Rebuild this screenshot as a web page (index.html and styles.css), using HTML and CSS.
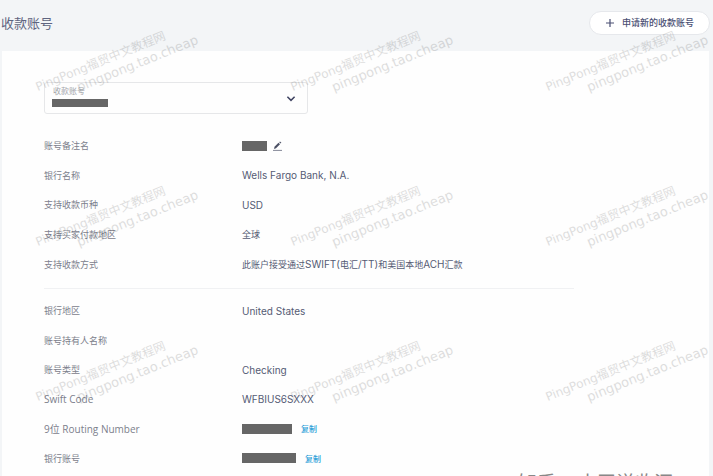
FILE: index.html
```
<!DOCTYPE html>
<html lang="zh-CN">
<head>
  <meta charset="UTF-8" />
  <title>收款账号</title>
  <meta name="viewport" content="width=device-width, initial-scale=1.0" />
  <link rel="stylesheet" href="styles.css">
</head>
<body>

  <header class="page-header">
    <h1>收款账号</h1>
    <button class="btn-apply" type="button">
      <svg width="8" height="8" viewBox="0 0 8 8" aria-hidden="true">
        <path d="M4 0V8M0 4H8" stroke="#4a4f73" stroke-width="1.2" />
      </svg>
      申请新的收款账号
    </button>
  </header>

  <main class="panel">
    <div class="account-select">
      <label for="account">收款账号</label>
      <select id="account">
        <option></option>
      </select>
      <span class="mask mask-account"></span>
      <svg class="chevron" width="10" height="6" viewBox="0 0 10 6" aria-hidden="true">
        <path d="M1.4 0.8L5 4.4L8.6 0.8" fill="none" stroke="#3f4361" stroke-width="1.5" />
      </svg>
    </div>

    <dl class="details">
      <div class="row">
        <dt>账号备注名</dt>
        <dd>
          <span class="mask mask-note"></span>
          <button class="btn-edit" type="button" aria-label="编辑">
            <svg width="9" height="10" viewBox="0 0 9 10" aria-hidden="true">
              <path d="M1 8L1.5 5.8L5.5 1.8L7 3.2L3 7.3Z" fill="#4a4f63" />
              <path d="M6.2 1.2L7 0.4L8.4 1.8L7.6 2.6Z" fill="#4a4f63" />
              <path d="M0 9.4H9" stroke="#777b8c" stroke-width="0.9" />
            </svg>
          </button>
        </dd>
      </div>
      <div class="row">
        <dt>银行名称</dt>
        <dd>Wells Fargo Bank, N.A.</dd>
      </div>
      <div class="row">
        <dt>支持收款币种</dt>
        <dd>USD</dd>
      </div>
      <div class="row">
        <dt>支持买家付款地区</dt>
        <dd class="cjk">全球</dd>
      </div>
      <div class="row">
        <dt>支持收款方式</dt>
        <dd class="cjk"><p>此账户接受通过<span>SWIFT(</span>电汇<span>/TT)</span>和美国本地<span>ACH</span>汇款</p></dd>
      </div>
    </dl>

    <dl class="details bank">
      <div class="row">
        <dt>银行地区</dt>
        <dd>United States</dd>
      </div>
      <div class="row">
        <dt>账号持有人名称</dt>
        <dd></dd>
      </div>
      <div class="row">
        <dt>账号类型</dt>
        <dd>Checking</dd>
      </div>
      <div class="row">
        <dt class="latin">Swift Code</dt>
        <dd>WFBIUS6SXXX</dd>
      </div>
      <div class="row">
        <dt class="latin">9位 Routing Number</dt>
        <dd><span class="mask mask-routing"></span><a class="copy" href="#">复制</a></dd>
      </div>
      <div class="row">
        <dt>银行账号</dt>
        <dd><span class="mask mask-number"></span><a class="copy" href="#">复制</a></dd>
      </div>
    </dl>
  </main>

  <div class="watermarks" aria-hidden="true">
    <p><span>PingPong福贸中文教程网</span><span>pingpong.tao.cheap</span></p>
    <p><span>PingPong福贸中文教程网</span><span>pingpong.tao.cheap</span></p>
    <p><span>PingPong福贸中文教程网</span><span>pingpong.tao.cheap</span></p>
    <p><span>PingPong福贸中文教程网</span><span>pingpong.tao.cheap</span></p>
    <p><span>PingPong福贸中文教程网</span><span>pingpong.tao.cheap</span></p>
    <p><span>PingPong福贸中文教程网</span><span>pingpong.tao.cheap</span></p>
    <p><span>PingPong福贸中文教程网</span><span>pingpong.tao.cheap</span></p>
    <p><span>PingPong福贸中文教程网</span><span>pingpong.tao.cheap</span></p>
    <p><span>PingPong福贸中文教程网</span><span>pingpong.tao.cheap</span></p>
  </div>
  <div class="credit">知乎 @小王说收汇</div>

</body>
</html>
```

FILE: styles.css
```
* {
  box-sizing: border-box;
}

body {
  position: relative;
  display: flex;
  flex-direction: column;
  min-height: 100vh;
  margin: 0;
  background: #f3f5f7;
  color: #555b74;
  font-family: "Open Sans", "Noto Sans CJK SC", sans-serif;
  font-size: 9px;
}

.page-header {
  display: flex;
  align-items: center;
  justify-content: space-between;
  height: 51px;
  padding: 0 3px 6px 1px;
}

h1 {
  margin: 0;
  color: #5f6580;
  font-size: 13px;
  font-weight: 400;
}

.btn-apply {
  display: flex;
  align-items: center;
  gap: 8px;
  height: 24px;
  padding: 0 15px 0 16px;
  border: 1px solid #e6e8ec;
  border-radius: 12px;
  background: #fff;
  color: #4a4f73;
  font: 500 9px "Noto Sans CJK SC", sans-serif;
}

.panel {
  flex: 1;
  margin: 0 4px 0 2px;
  padding: 31px 42px 0;
  background: #fefefe;
}

.account-select {
  position: relative;
  width: 264px;
  margin-bottom: 17px;
}

.account-select select {
  display: block;
  width: 100%;
  height: 32px;
  border: 1px solid #e6e7e9;
  border-radius: 3px;
  background: transparent;
  appearance: none;
}

.account-select label {
  position: absolute;
  top: 3px;
  left: 9px;
  color: #a3a5ab;
  font-size: 8px;
  line-height: 12px;
}

.mask {
  display: inline-block;
  height: 10px;
  background: #666;
}

.mask-account {
  position: absolute;
  top: 17px;
  left: 8px;
  width: 56px;
  height: 8px;
}

.mask-note {
  width: 25px;
}

.mask-routing {
  width: 50px;
}

.mask-number {
  width: 54px;
}

.chevron {
  position: absolute;
  top: 14px;
  right: 12px;
}

.details {
  display: grid;
  grid-template-rows: repeat(5, 1fr);
  max-width: 530px;
  height: 158px;
  margin: 0;
  padding-bottom: 9px;
  border-bottom: 1px solid #f0f1f3;
}

.bank {
  grid-template-rows: repeat(6, 1fr);
  height: 184px;
  padding: 7px 0 0;
  border-bottom: 0;
}

.row {
  display: flex;
  align-items: center;
}

dt {
  width: 198px;
  color: #7c808c;
}

dt.latin {
  font-size: 10px;
}

dd {
  display: flex;
  align-items: center;
  margin: 0;
  font-family: Inter, "Noto Sans CJK SC", sans-serif;
  font-size: 10px;
}

dd.cjk {
  font-size: 9px;
}

dd p {
  margin: 0;
}

dd p span {
  font-size: 10px;
}

.btn-edit {
  display: flex;
  margin-left: 6px;
  padding: 0;
  border: 0;
  background: none;
}

.copy {
  margin-left: 9px;
  color: #2ba0d8;
  font-size: 8px;
  font-weight: 500;
  text-decoration: none;
}

/* watermark tiles over the whole page */
.watermarks {
  position: absolute;
  top: 48px;
  left: 33px;
  display: grid;
  grid-template-columns: repeat(3, 170px);
  grid-auto-rows: 30px;
  gap: 125px 85px;
  color: #000;
  opacity: 0.13;
  pointer-events: none;
}

.watermarks p {
  margin: 0;
  font: 13px/15px "DejaVu Sans", "Noto Sans CJK SC", sans-serif;
  white-space: nowrap;
  transform: rotate(-22deg);
}

.watermarks span {
  display: block;
  font-size: 12px;
}

.watermarks span + span {
  padding-left: 38px;
  font-size: 13px;
}

.credit {
  position: absolute;
  right: 40px;
  bottom: 0;
  height: 3px;
  overflow: hidden;
  color: #888;
  font-size: 19px;
  line-height: 20px;
}
```
